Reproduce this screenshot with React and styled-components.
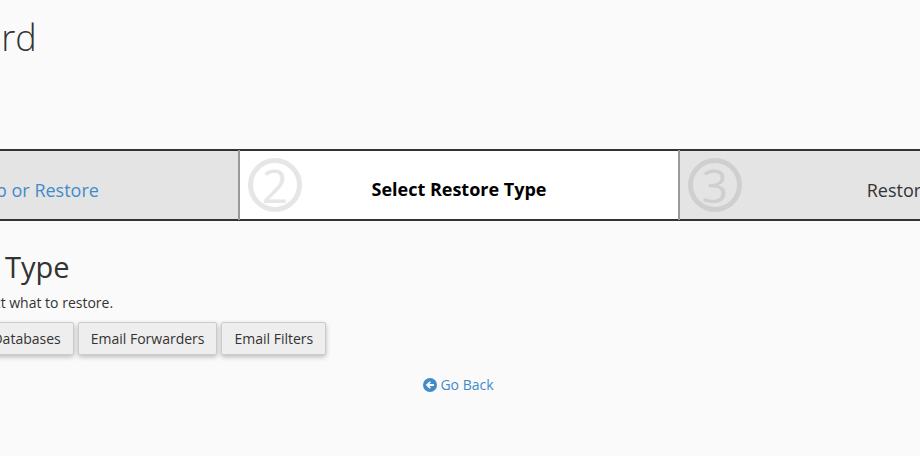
import React from "react";
import styled, { createGlobalStyle } from "styled-components";

const Global = createGlobalStyle`
  html, body { margin: 0; padding: 0; background: #fafafa; }
  body { font-family: "Open Sans", "Liberation Sans", sans-serif; color: #333; overflow: hidden; }
`;

const Viewport = styled.div`
  width: 920px;
  height: 456px;
  overflow: hidden;
`;

const Page = styled.main`
  width: 1332px;
  margin-left: -212px;
  padding-top: 13px;
`;

const Title = styled.h1`
  margin: 0 0 0 9px;
  font-size: 36px;
  font-weight: 300;
  line-height: 49px;
  color: #333;
`;

const Stepper = styled.ol`
  display: grid;
  grid-template-columns: repeat(3, 440px);
  margin: 87px 0 0 12px;
  padding: 0;
  list-style: none;
  border-top: 2px solid #333;
  border-bottom: 2px solid #333;
`;

const Step = styled.li`
  position: relative;
  height: 68px;
  display: flex;
  align-items: center;
  justify-content: center;
  box-sizing: border-box;
  background: ${(p) => (p.$active ? "#fff" : "#e4e4e4")};
  margin-left: ${(p) => (p.$first ? "0" : "-2px")};
  padding-left: ${(p) => (p.$first ? "4px" : "0")};
  padding-top: ${(p) => (p.$active ? "7px" : "9px")};
  font-size: 18px;
  line-height: 24px;
  color: ${(p) => (p.$active ? "#000" : "#333")};
  font-weight: ${(p) => (p.$active ? 700 : 400)};

  &::before {
    content: "";
    display: ${(p) => (p.$first ? "none" : "block")};
    position: absolute;
    left: 0;
    top: -1px;
    bottom: -1px;
    width: 2px;
    background: #999;
  }
`;

const StepNumber = styled.span`
  position: absolute;
  left: 10px;
  top: 7px;
  width: 54px;
  height: 54px;
  box-sizing: border-box;
  border: 5px solid ${(p) => (p.$active ? "#e6e6e6" : "#cfcfcf")};
  border-radius: 50%;
  display: flex;
  align-items: center;
  justify-content: center;
  font-size: 46px;
  line-height: 1;
  font-weight: 400;
  color: ${(p) => (p.$active ? "#e6e6e6" : "#cfcfcf")};
`;

const StepLink = styled.a`
  color: #428bca;
  text-decoration: none;
`;

const Content = styled.section`
  padding: 27px 0 0 11px;
`;

const Heading = styled.h2`
  margin: 0 0 0 7px;
  font-size: 29px;
  font-weight: 400;
  line-height: 38px;
  color: #333;
`;

const Lead = styled.p`
  margin: 7px 0 0 168px;
  font-size: 14px;
  line-height: 20px;
  color: #333;
`;

const ButtonRow = styled.div`
  display: flex;
  gap: 4px;
  margin: 9px 0 0 -2px;
`;

const Button = styled.button`
  height: 33px;
  padding: 0 12px;
  font-family: inherit;
  font-size: 14px;
  color: #333;
  background: #eee;
  border: 1px solid #ccc;
  border-radius: 2px;
  box-shadow: 0 2px 5px rgba(0, 0, 0, 0.26);
`;

const Back = styled.p`
  margin: 20px 0 0;
  padding-right: 2px;
  display: flex;
  justify-content: center;
`;

const BackLink = styled.a`
  display: inline-flex;
  align-items: center;
  gap: 3px;
  font-size: 14px;
  line-height: 20px;
  color: #428bca;
  text-decoration: none;
`;

const BackIcon = () => (
  <svg width="14" height="14" viewBox="0 0 14 14" aria-hidden="true">
    <circle cx="7" cy="7" r="7" fill="#428bca" />
    <path d="M2.8 7 6.6 3.3 7.9 4.6 6.4 6H11v2H6.4l1.5 1.4-1.3 1.3z" fill="#fafafa" />
  </svg>
);

export default function App() {
  return (
    <Viewport>
      <Global />
      <Page>
        <Title>Backup Wizard</Title>
        <Stepper>
          <Step $first>
            <StepNumber>1</StepNumber>
            <StepLink href="#">Backup or Restore</StepLink>
          </Step>
          <Step $active>
            <StepNumber $active>2</StepNumber>
            Select Restore Type
          </Step>
          <Step>
            <StepNumber>3</StepNumber>
            Restore
          </Step>
        </Stepper>
        <Content>
          <Heading>Select Restore Type</Heading>
          <Lead>Select what to restore.</Lead>
          <ButtonRow>
            <Button>Home Directory</Button>
            <Button>MySQL Databases</Button>
            <Button>Email Forwarders</Button>
            <Button>Email Filters</Button>
          </ButtonRow>
          <Back>
            <BackLink href="#">
              <BackIcon />
              Go Back
            </BackLink>
          </Back>
        </Content>
      </Page>
    </Viewport>
  );
}
